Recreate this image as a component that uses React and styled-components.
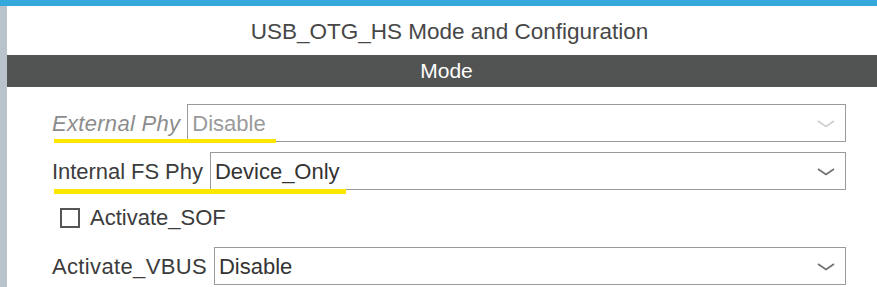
import styled, { createGlobalStyle } from "styled-components";

const GlobalStyle = createGlobalStyle`
  html, body {
    margin: 0;
    padding: 0;
    background: #ffffff;
    font-family: "Liberation Sans", Arial, sans-serif;
  }
`;

const Page = styled.div`
  width: 877px;
  height: 287px;
  overflow: hidden;
  display: flex;
  flex-direction: column;
`;

const TopBar = styled.div`
  height: 6px;
  background: #35a8dc;
  flex-shrink: 0;
`;

const Body = styled.div`
  flex: 1;
  display: flex;
`;

const LeftRail = styled.div`
  width: 7px;
  background: #b9c3c9;
  flex-shrink: 0;
`;

const Main = styled.div`
  flex: 1;
  display: flex;
  flex-direction: column;
`;

const Title = styled.div`
  height: 49px;
  padding: 3px 0 0 15px;
  box-sizing: border-box;
  display: flex;
  align-items: center;
  justify-content: center;
  font-size: 22.5px;
  color: #474747;
`;

const SectionBar = styled.div`
  height: 32px;
  padding-left: 9px;
  background: #525453;
  color: #ffffff;
  display: flex;
  align-items: center;
  justify-content: center;
  font-size: 21px;
`;

const Form = styled.div`
  padding: 17px 31px 0 45px;
  display: flex;
  flex-direction: column;
  gap: 9.5px;
`;

const Row = styled.div`
  position: relative;
  height: 38px;
  display: flex;
  align-items: center;
  gap: 7px;
`;

const Label = styled.span`
  padding-top: 2px;
  font-size: 22px;
  white-space: nowrap;
  letter-spacing: ${(p) => p.$spacing || 0}px;
  color: ${(p) => (p.$disabled ? "#8c8c8c" : "#3c3c3c")};
  font-style: ${(p) => (p.$disabled ? "italic" : "normal")};
`;

const SelectBox = styled.div`
  flex: 1;
  height: 38px;
  box-sizing: border-box;
  border: 1px solid #9a9a9a;
  display: flex;
  align-items: center;
  justify-content: space-between;
  padding: 2px 10px 0 4px;
  font-size: 22px;
  color: ${(p) => (p.$disabled ? "#9a9a9a" : "#333333")};
`;

const Chevron = styled.svg`
  width: 18px;
  height: 8px;
  display: block;
`;

const Highlight = styled.div`
  position: absolute;
  left: 2px;
  width: ${(p) => p.$width}px;
  bottom: ${(p) => p.$bottom}px;
  height: ${(p) => p.$height}px;
  background: #ffe600;
`;

const CheckRow = styled.label`
  height: 38px;
  display: flex;
  align-items: center;
  gap: 10px;
  padding-left: 8px;
  font-size: 22px;
  color: #3c3c3c;
`;

const CheckBox = styled.span`
  width: 20px;
  height: 20px;
  box-sizing: border-box;
  border: 2px solid #555555;
  background: #ffffff;
`;

const Arrow = ({ color }) => (
  <Chevron viewBox="0 0 18 8">
    <path d="M1 1 L9 6.5 L17 1" fill="none" stroke={color} strokeWidth="1.6" />
  </Chevron>
);

const Select = ({ value, disabled }) => (
  <SelectBox $disabled={disabled}>
    <span>{value}</span>
    <Arrow color={disabled ? "#cfcfcf" : "#6f6f6f"} />
  </SelectBox>
);

export default function App() {
  return (
    <>
      <GlobalStyle />
      <Page>
        <TopBar />
        <Body>
          <LeftRail />
          <Main>
            <Title>USB_OTG_HS Mode and Configuration</Title>
            <SectionBar>Mode</SectionBar>
            <Form>
              <Row>
                <Label $disabled $spacing={0.3}>External Phy</Label>
                <Select value="Disable" disabled />
                <Highlight $width={222} $bottom={-1} $height={4} />
              </Row>
              <Row>
                <Label $spacing={-0.05}>Internal FS Phy</Label>
                <Select value="Device_Only" />
                <Highlight $width={292} $bottom={-4} $height={5} />
              </Row>
              <CheckRow>
                <CheckBox />
                Activate_SOF
              </CheckRow>
              <Row>
                <Label $spacing={0.35}>Activate_VBUS</Label>
                <Select value="Disable" />
              </Row>
            </Form>
          </Main>
        </Body>
      </Page>
    </>
  );
}
